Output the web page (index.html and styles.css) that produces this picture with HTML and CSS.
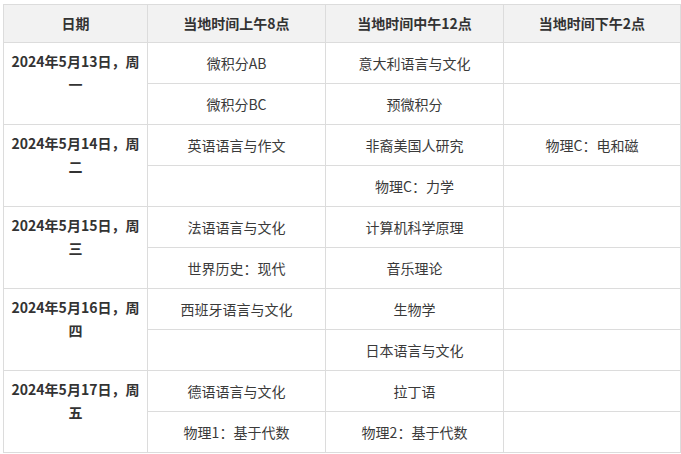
FILE: index.html
```html
<!DOCTYPE html>
<html lang="zh-CN">
<head>
<meta charset="utf-8">
<title>考试时间表</title>
<link rel="stylesheet" href="styles.css">
</head>
<body>
<table class="schedule">
  <colgroup>
    <col class="c-date">
    <col class="c-slot">
    <col class="c-slot">
    <col class="c-slot-last">
  </colgroup>
  <thead>
    <tr>
      <th>日期</th>
      <th>当地时间上午8点</th>
      <th>当地时间中午12点</th>
      <th>当地时间下午2点</th>
    </tr>
  </thead>
  <tbody>
    <tr>
      <td class="date" rowspan="2">2024年5月13日，周一</td>
      <td>微积分AB</td>
      <td>意大利语言与文化</td>
      <td></td>
    </tr>
    <tr>
      <td>微积分BC</td>
      <td>预微积分</td>
      <td></td>
    </tr>
    <tr>
      <td class="date" rowspan="2">2024年5月14日，周二</td>
      <td>英语语言与作文</td>
      <td>非裔美国人研究</td>
      <td>物理C：电和磁</td>
    </tr>
    <tr>
      <td></td>
      <td>物理C：力学</td>
      <td></td>
    </tr>
    <tr>
      <td class="date" rowspan="2">2024年5月15日，周三</td>
      <td>法语语言与文化</td>
      <td>计算机科学原理</td>
      <td></td>
    </tr>
    <tr>
      <td>世界历史：现代</td>
      <td>音乐理论</td>
      <td></td>
    </tr>
    <tr>
      <td class="date" rowspan="2">2024年5月16日，周四</td>
      <td>西班牙语言与文化</td>
      <td>生物学</td>
      <td></td>
    </tr>
    <tr>
      <td></td>
      <td>日本语言与文化</td>
      <td></td>
    </tr>
    <tr>
      <td class="date" rowspan="2">2024年5月17日，周五</td>
      <td>德语语言与文化</td>
      <td>拉丁语</td>
      <td></td>
    </tr>
    <tr>
      <td>物理1：基于代数</td>
      <td>物理2：基于代数</td>
      <td></td>
    </tr>
  </tbody>
</table>
</body>
</html>
```
FILE: styles.css
```css
html, body {
  background: #ffffff;
}
body {
  margin: 4px 0 0 3px;
  font-family: "Noto Sans CJK SC", "Noto Sans", "Liberation Sans", sans-serif;
  font-size: 14px;
  color: #3a3a3a;
}
.schedule {
  border-collapse: collapse;
  table-layout: fixed;
  width: 677px;
}
.c-date { width: 144px; }
.c-slot { width: 178px; }
.c-slot-last { width: 177px; }
.schedule th,
.schedule td {
  border: 1px solid #dcdcdc;
  text-align: center;
  vertical-align: middle;
  line-height: 23px;
  padding: 0 10px;
  box-sizing: border-box;
}
.schedule th {
  background: #f2f2f2;
  color: #333333;
  font-weight: bold;
  height: 38px;
}
.schedule td {
  height: 41px;
}
.schedule td.date {
  vertical-align: top;
  padding: 7px 5px 0;
  font-weight: bold;
  color: #333333;
}
```
